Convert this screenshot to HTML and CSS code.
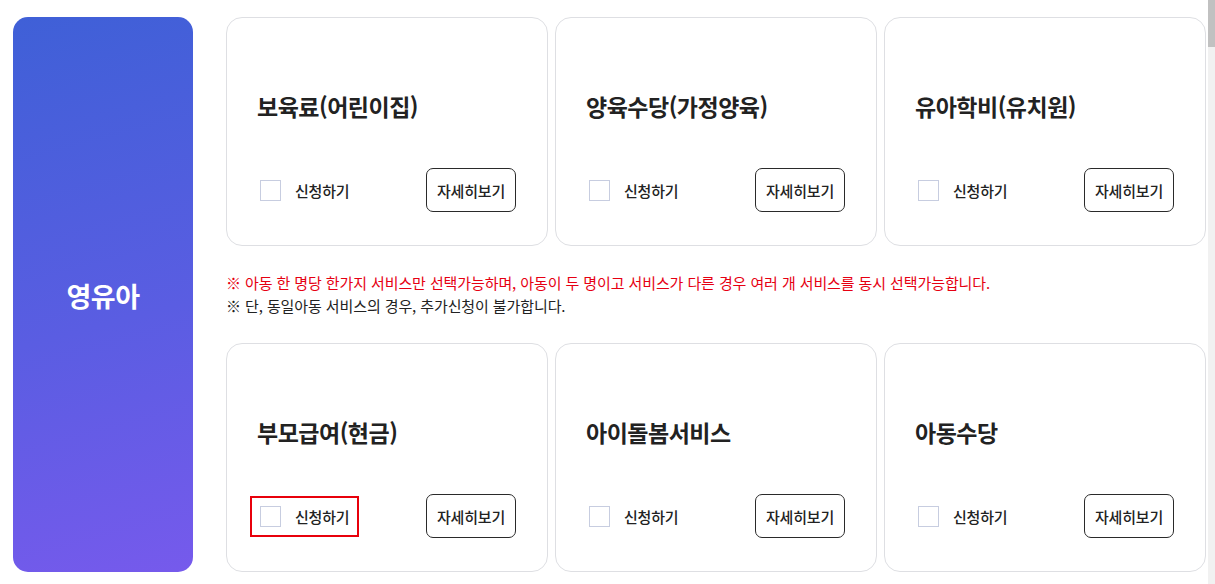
FILE: index.html
```html
<!DOCTYPE html>
<html lang="ko">
<head>
<meta charset="utf-8">
<title>영유아</title>
<link rel="stylesheet" href="styles.css">
</head>
<body>
<div class="page">
  <aside class="category"><span class="category-name">영유아</span></aside>
  <main class="content">
    <div class="cards">
      <div class="card">
        <h3 class="card-title">보육료(어린이집)</h3>
        <div class="card-actions">
          <label class="apply"><span class="box"></span><span class="apply-text">신청하기</span></label>
          <button class="detail">자세히보기</button>
        </div>
      </div>
      <div class="card">
        <h3 class="card-title">양육수당(가정양육)</h3>
        <div class="card-actions">
          <label class="apply"><span class="box"></span><span class="apply-text">신청하기</span></label>
          <button class="detail">자세히보기</button>
        </div>
      </div>
      <div class="card">
        <h3 class="card-title">유아학비(유치원)</h3>
        <div class="card-actions">
          <label class="apply"><span class="box"></span><span class="apply-text">신청하기</span></label>
          <button class="detail">자세히보기</button>
        </div>
      </div>
    </div>
    <div class="notice">
      <p class="notice-red">※ 아동 한 명당 한가지 서비스만 선택가능하며, 아동이 두 명이고 서비스가 다른 경우 여러 개 서비스를 동시 선택가능합니다.</p>
      <p>※ 단, 동일아동 서비스의 경우, 추가신청이 불가합니다.</p>
    </div>
    <div class="cards">
      <div class="card">
        <h3 class="card-title">부모급여(현금)</h3>
        <div class="card-actions">
          <label class="apply highlight"><span class="box"></span><span class="apply-text">신청하기</span></label>
          <button class="detail">자세히보기</button>
        </div>
      </div>
      <div class="card">
        <h3 class="card-title">아이돌봄서비스</h3>
        <div class="card-actions">
          <label class="apply"><span class="box"></span><span class="apply-text">신청하기</span></label>
          <button class="detail">자세히보기</button>
        </div>
      </div>
      <div class="card">
        <h3 class="card-title">아동수당</h3>
        <div class="card-actions">
          <label class="apply"><span class="box"></span><span class="apply-text">신청하기</span></label>
          <button class="detail">자세히보기</button>
        </div>
      </div>
    </div>
  </main>
</div>
<div class="scrollbar"><div class="scrollbar-thumb"></div></div>
</body>
</html>
```
FILE: styles.css
```css
* { box-sizing: border-box; }
html, body { margin: 0; padding: 0; background: #fff; overflow: hidden; }
body {
  font-family: "Noto Sans CJK KR", "Noto Sans", sans-serif;
  color: #222;
}
.page {
  display: flex;
  gap: 33px;
  padding: 17px 0 0 13px;
  width: 1208px;
}
.category {
  width: 180px;
  flex: none;
  border-radius: 15px;
  background: linear-gradient(165deg, #3f60d7 0%, #5a5de2 55%, #765aec 100%);
  display: flex;
  align-items: center;
  justify-content: center;
}
.category-name {
  color: #fff;
  font-size: 27px;
  font-weight: 700;
  letter-spacing: -0.5px;
  margin-top: 2px;
}
.content {
  width: 980px;
  flex: none;
}
.cards {
  display: grid;
  grid-template-columns: repeat(3, 322px);
  gap: 7px;
}
.card {
  border: 1px solid #dedfe3;
  border-radius: 16px;
  height: 229px;
  padding: 73px 31px 0 30px;
  display: flex;
  flex-direction: column;
}
.card-title {
  margin: 0;
  font-size: 23px;
  line-height: 30px;
  font-weight: 700;
  letter-spacing: -0.5px;
  color: #222;
}
.card-actions {
  margin-top: 47px;
  display: flex;
  align-items: center;
  justify-content: space-between;
}
.apply {
  display: flex;
  align-items: center;
  gap: 14px;
  margin-left: 3px;
  height: 21px;
}
.apply.highlight {
  outline: 2px solid #e8000b;
  outline-offset: 8px;
}
.box {
  width: 21px;
  height: 21px;
  border: 1px solid #c7cde0;
  background: #fff;
}
.apply-text {
  font-size: 15px;
  font-weight: 500;
  letter-spacing: -0.2px;
  color: #222;
}
.detail {
  width: 90px;
  height: 44px;
  border: 1px solid #2a2a2a;
  border-radius: 7px;
  background: #fff;
  font-family: inherit;
  font-size: 15px;
  font-weight: 500;
  letter-spacing: -0.2px;
  color: #222;
  padding: 0;
}
.notice {
  padding: 25px 0 26px;
  font-size: 15px;
  line-height: 23px;
  letter-spacing: -0.1px;
}
.notice p { margin: 0; color: #222; }
.notice .notice-red { color: #e60012; }
.scrollbar {
  position: fixed;
  top: 0;
  right: 0;
  width: 7px;
  height: 100%;
  background: #f1f1f1;
}
.scrollbar-thumb {
  height: 47px;
  background: #c1c1c1;
}
```
